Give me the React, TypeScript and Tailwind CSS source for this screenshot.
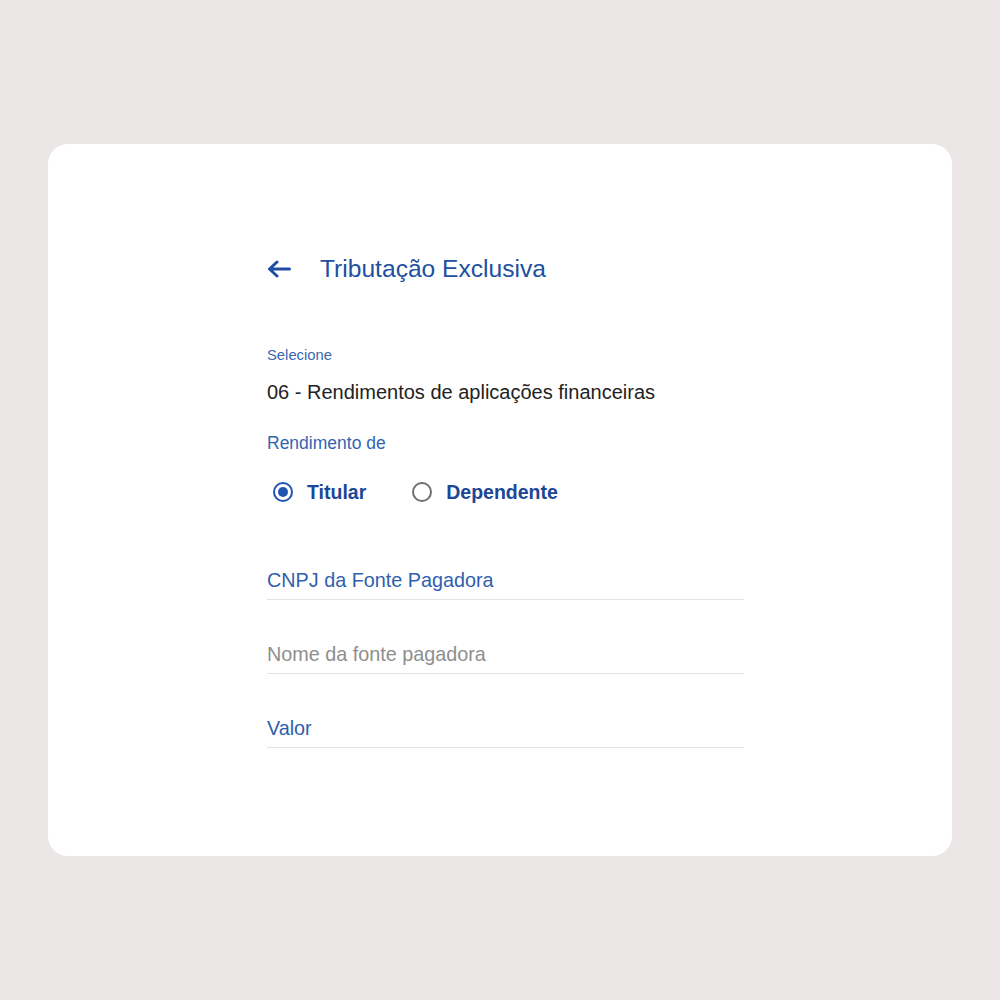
import React from "react";

function Radio({ checked, label }: { checked: boolean; label: string }) {
  return (
    <div className="flex items-center">
      <span
        className={
          "flex h-[20px] w-[20px] items-center justify-center rounded-full border-2 " +
          (checked ? "border-[#1f55b0]" : "border-[#6f6f6f]")
        }
      >
        {checked && <span className="h-[10px] w-[10px] rounded-full bg-[#1f55b0]" />}
      </span>
      <span className="ml-[14px] text-[19.5px] leading-[22px] font-bold text-[#1c4796]">{label}</span>
    </div>
  );
}

function Field({ label, muted, className }: { label: string; muted?: boolean; className?: string }) {
  return (
    <div className={"border-b border-[#e3e3e3] pb-2 " + (className ?? "")}>
      <div
        className={
          "text-[19.8px] leading-[22px] " + (muted ? "text-[#8e8e8e]" : "text-[#2f5fae]")
        }
      >
        {label}
      </div>
    </div>
  );
}

export default function App() {
  return (
    <div className="min-h-[1000px] w-full bg-[#ebe7e6] pt-[144px] px-[48px] font-['Liberation_Sans',Arial,sans-serif]">
      <div className="h-[712px] w-full rounded-[20px] bg-white pt-[111px]">
        <div className="ml-[219px] w-[477px]">
          <div className="flex h-[28px] items-center">
            <svg width="24" height="18" viewBox="0 0 24 18" className="text-[#1f4fa3]">
              <path
                d="M22.5 9 H3 M10 2 L2.5 9 L10 16"
                fill="none"
                stroke="currentColor"
                strokeWidth="3"
                strokeLinecap="round"
                strokeLinejoin="round"
              />
            </svg>
            <span className="ml-[29px] text-[24.6px] leading-[28px] text-[#214fa0]">Tributação Exclusiva</span>
          </div>

          <div className="mt-[64px] text-[14.8px] leading-[16px] text-[#3a68b0]">Selecione</div>
          <div className="mt-[18px] text-[20px] leading-[22px] text-[#222222]">
            06 - Rendimentos de aplicações financeiras
          </div>
          <div className="mt-[30px] text-[17.5px] leading-[20px] text-[#3464b0]">Rendimento de</div>

          <div className="mt-[28px] flex items-center pl-[6px]">
            <Radio checked label="Titular" />
            <div className="ml-[46px]">
              <Radio checked={false} label="Dependente" />
            </div>
          </div>

          <Field label="CNPJ da Fonte Pagadora" className="mt-[66px]" />
          <Field label="Nome da fonte pagadora" muted className="mt-[43px]" />
          <Field label="Valor" className="mt-[43px]" />
        </div>
      </div>
    </div>
  );
}
